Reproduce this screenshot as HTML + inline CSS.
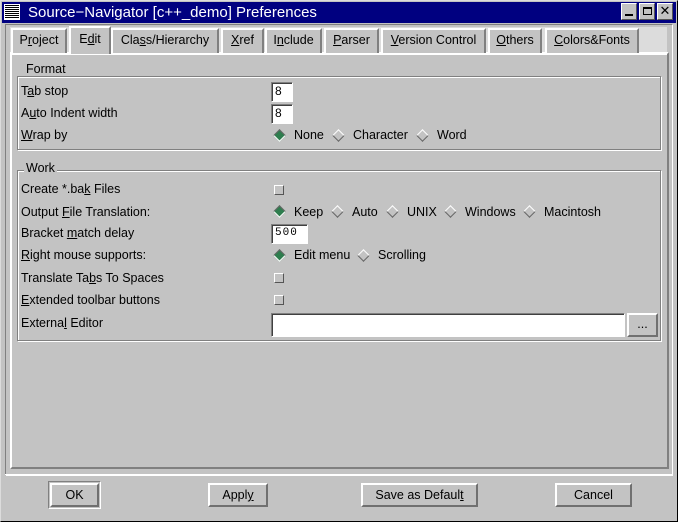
<!DOCTYPE html>
<html><head><meta charset="utf-8"><style>
*{box-sizing:border-box;margin:0;padding:0}
body{width:678px;height:522px;background:#c3c3c3;font-family:"Liberation Sans",sans-serif;font-size:12.5px;color:#000;position:relative;overflow:hidden}
.a{position:absolute}
.win{left:0;top:0;width:678px;height:522px;border:1px solid #000;border-top-color:#dcdcdc;border-left-color:#dcdcdc}
.title{left:2px;top:2px;width:674px;height:21px;background:#000080;color:#fff;font-size:15px;line-height:21px;padding-left:26px}
.menu{left:4px;top:4px;width:16px;height:16px;background:repeating-linear-gradient(#000 0 1px,#fff 1px 2px);border:1px solid #fff}
.wb{top:3px;width:16px;height:17px;background:#c3c3c3;border:1px solid;border-color:#fff #555 #555 #fff}
.tab{top:28px;height:25px;border:2px solid;border-color:#fff #808080 transparent #fff;border-bottom:none;text-align:center;line-height:21px;font-size:12.5px;white-space:nowrap}
.sel{top:26px;height:28px;background:#c3c3c3;z-index:2;line-height:23px}
.panel{left:10px;top:52px;width:659px;height:417px;border:2px solid;border-color:#fff #808080 #808080 #fff}
.grp{border:1px solid #808080;box-shadow:1px 1px 0 #fff inset,1px 1px 0 #fff}
.gl{background:#c3c3c3;padding:0 2px}
.lbl{left:21px}
.in{background:#fff;border:1px solid;border-color:#808080 #fff #fff #808080;box-shadow:inset 1px 1px 0 #404040;padding-left:3px;line-height:17px;font-size:12px}
.mono{font-family:"Liberation Mono",monospace;font-size:11px}
.cb{width:10px;height:10px;border:1px solid;border-color:#fff #555 #555 #fff;background:#c3c3c3}
.rd{width:9px;height:9px;transform:rotate(45deg);border:1px solid;border-color:#fff #666 #666 #fff;background:#c3c3c3}
.rd.on{background:#2e7d4e;border-color:#666 #fff #fff #666}
.btn{height:24px;border:2px solid;border-color:#fff #707070 #707070 #fff;text-align:center;line-height:20px;background:#c3c3c3}
u{text-decoration:underline}
</style></head><body>
<div class="a win"></div>
<div class="a title">Source−Navigator [c++_demo] Preferences</div>
<div class="a menu"></div>
<div class="a wb" style="left:621px"><div class="a" style="left:3px;top:10px;width:8px;height:2px;background:#000"></div></div>
<div class="a wb" style="left:639px"><div class="a" style="left:3px;top:3px;width:9px;height:8px;border:1px solid #000;border-top-width:2px"></div></div>
<div class="a wb" style="left:657px;font-size:13px;line-height:14px;text-align:center">✕</div>
<div class="a" style="left:5px;top:24px;width:668px;height:452px;border:1px solid;border-color:#808080 #fff #fff #808080"></div>
<div class="a" style="left:10px;top:27px;width:657px;height:26px;background:#dcdcdc"></div>
<div class="a panel"></div>
<div class="a" style="left:12px;top:53px;width:655px;height:2px;background:#fff"></div>
<div class="a tab" style="left:11px;width:56px;background:#c3c3c3">P<u>r</u>oject</div>
<div class="a tab sel" style="left:69px;width:42px">E<u>d</u>it</div>
<div class="a tab" style="left:111px;width:108px;background:#c3c3c3">Cla<u>s</u>s/Hierarchy</div>
<div class="a tab" style="left:221px;width:43px;background:#c3c3c3"><u>X</u>ref</div>
<div class="a tab" style="left:265px;width:57px;background:#c3c3c3">I<u>n</u>clude</div>
<div class="a tab" style="left:324px;width:55px;background:#c3c3c3"><u>P</u>arser</div>
<div class="a tab" style="left:381px;width:105px;background:#c3c3c3"><u>V</u>ersion Control</div>
<div class="a tab" style="left:488px;width:54px;background:#c3c3c3"><u>O</u>thers</div>
<div class="a tab" style="left:545px;width:94px;background:#c3c3c3"><u>C</u>olors&amp;Fonts</div>

<div class="a grp" style="left:17px;top:76px;width:644px;height:74px"></div>
<div class="a gl" style="left:24px;top:62px">Format</div>
<div class="a lbl" style="top:84px">T<u>a</u>b stop</div>
<div class="a lbl" style="top:106px">A<u>u</u>to Indent width</div>
<div class="a lbl" style="top:128px"><u>W</u>rap by</div>
<div class="a in" style="left:271px;top:82px;width:22px;height:20px">8</div>
<div class="a in" style="left:271px;top:104px;width:22px;height:20px">8</div>
<div class="a rd on" style="left:275px;top:131px"></div><div class="a" style="left:294px;top:128px">None</div>
<div class="a rd" style="left:334px;top:131px"></div><div class="a" style="left:353px;top:128px">Character</div>
<div class="a rd" style="left:418px;top:131px"></div><div class="a" style="left:437px;top:128px">Word</div>

<div class="a grp" style="left:17px;top:170px;width:644px;height:171px"></div>
<div class="a gl" style="left:24px;top:161px">Work</div>
<div class="a lbl" style="top:182px">Create *.ba<u>k</u> Files</div>
<div class="a lbl" style="top:205px">Output <u>F</u>ile Translation:</div>
<div class="a lbl" style="top:226px">Bracket <u>m</u>atch delay</div>
<div class="a lbl" style="top:248px"><u>R</u>ight mouse supports:</div>
<div class="a lbl" style="top:271px">Translate Ta<u>b</u>s To Spaces</div>
<div class="a lbl" style="top:293px"><u>E</u>xtended toolbar buttons</div>
<div class="a lbl" style="top:316px">Externa<u>l</u> Editor</div>
<div class="a cb" style="left:274px;top:185px"></div>
<div class="a rd on" style="left:275px;top:207px"></div><div class="a" style="left:294px;top:205px">Keep</div>
<div class="a rd" style="left:333px;top:207px"></div><div class="a" style="left:352px;top:205px">Auto</div>
<div class="a rd" style="left:388px;top:207px"></div><div class="a" style="left:407px;top:205px">UNIX</div>
<div class="a rd" style="left:446px;top:207px"></div><div class="a" style="left:465px;top:205px">Windows</div>
<div class="a rd" style="left:525px;top:207px"></div><div class="a" style="left:544px;top:205px">Macintosh</div>
<div class="a in mono" style="left:271px;top:224px;width:37px;height:20px;letter-spacing:1px">500</div>
<div class="a rd on" style="left:275px;top:251px"></div><div class="a" style="left:294px;top:248px">Edit menu</div>
<div class="a rd" style="left:359px;top:251px"></div><div class="a" style="left:378px;top:248px">Scrolling</div>
<div class="a cb" style="left:274px;top:273px"></div>
<div class="a cb" style="left:274px;top:295px"></div>
<div class="a in" style="left:271px;top:313px;width:354px;height:24px"></div>
<div class="a btn" style="left:627px;top:313px;width:31px;height:24px;line-height:18px">...</div>

<div class="a" style="left:5px;top:474px;width:668px;height:1px;background:#fff"></div>
<div class="a" style="left:48px;top:481px;width:53px;height:28px;border:1px solid;border-color:#808080 #fff #fff #808080"></div>
<div class="a btn" style="left:50px;top:483px;width:49px">OK</div>
<div class="a btn" style="left:208px;top:483px;width:60px">Appl<u>y</u></div>
<div class="a btn" style="left:361px;top:483px;width:117px">Save as Defaul<u>t</u></div>
<div class="a btn" style="left:555px;top:483px;width:77px">Cancel</div>
</body></html>
